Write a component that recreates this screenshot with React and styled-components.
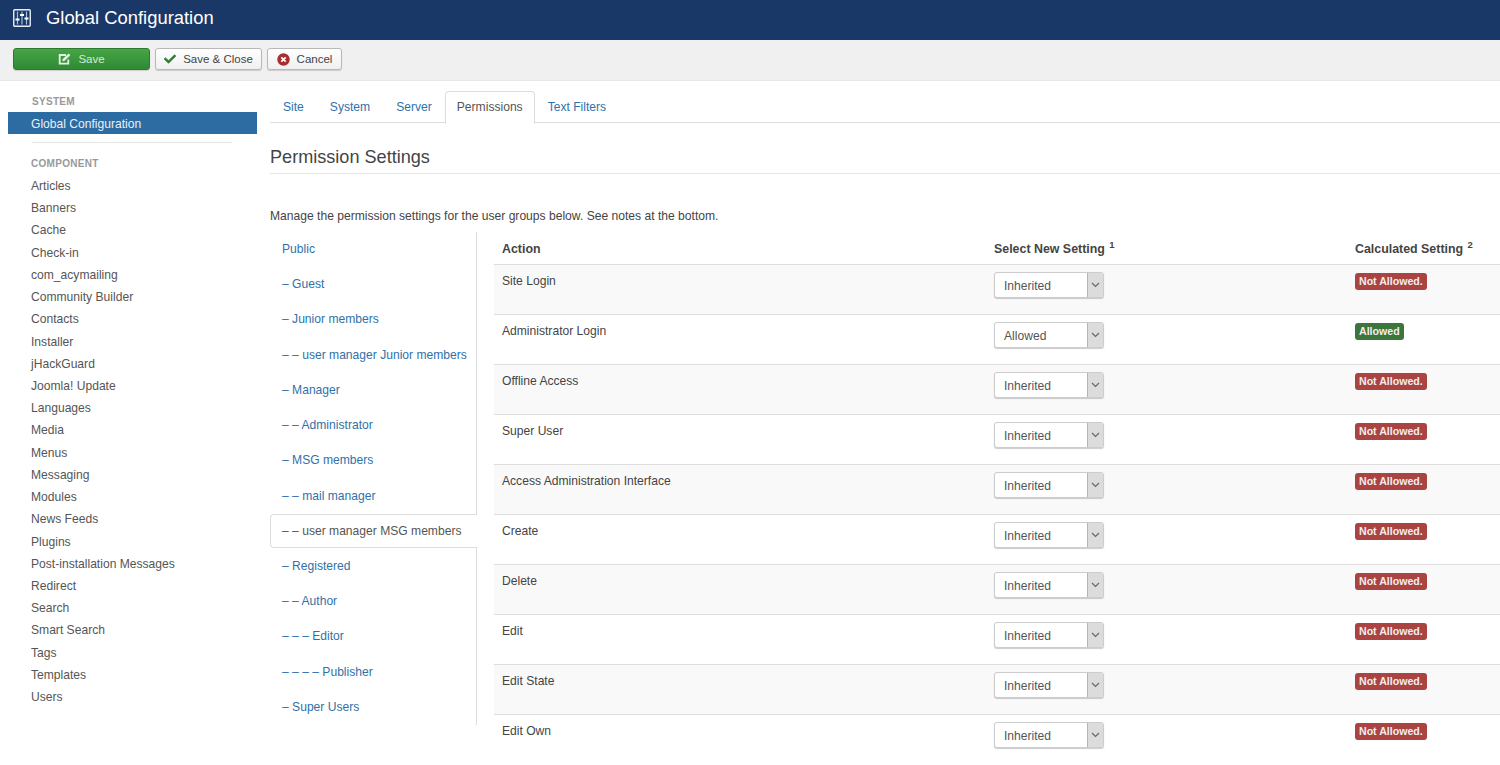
import React from 'react';
import styled, { createGlobalStyle } from 'styled-components';
import { FaCheck } from 'react-icons/fa';

const components = [
  'Articles', 'Banners', 'Cache', 'Check-in', 'com_acymailing', 'Community Builder', 'Contacts',
  'Installer', 'jHackGuard', 'Joomla! Update', 'Languages', 'Media', 'Menus', 'Messaging', 'Modules',
  'News Feeds', 'Plugins', 'Post-installation Messages', 'Redirect', 'Search', 'Smart Search', 'Tags',
  'Templates', 'Users',
];

const tabs = ['Site', 'System', 'Server', 'Permissions', 'Text Filters'];

const groups = [
  'Public', '– Guest', '– Junior members', '– – user manager Junior members', '– Manager',
  '– – Administrator', '– MSG members', '– – mail manager', '– – user manager MSG members',
  '– Registered', '– – Author', '– – – Editor', '– – – – Publisher', '– Super Users',
];

const actions = [
  ['Site Login', 'Inherited', false],
  ['Administrator Login', 'Allowed', true],
  ['Offline Access', 'Inherited', false],
  ['Super User', 'Inherited', false],
  ['Access Administration Interface', 'Inherited', false],
  ['Create', 'Inherited', false],
  ['Delete', 'Inherited', false],
  ['Edit', 'Inherited', false],
  ['Edit State', 'Inherited', false],
  ['Edit Own', 'Inherited', false],
];

const GlobalStyle = createGlobalStyle`
  html, body {
    margin: 0;
    padding: 0;
    background: #fff;
  }
  body {
    font-family: "Liberation Sans", Arial, sans-serif;
    font-size: 12.1px;
    line-height: 18px;
    color: #555;
  }
`;

const Page = styled.div`
  height: 765px;
  overflow: hidden;
`;

const Header = styled.header`
  height: 40px;
  background: #1a3867;
  display: flex;
  align-items: center;
  padding: 0 0 4px 13px;
  box-sizing: border-box;
  gap: 15px;
`;

const Title = styled.h1`
  margin: 0;
  font-size: 18.4px;
  font-weight: 400;
  color: #fff;
`;

const Toolbar = styled.div`
  height: 41px;
  box-sizing: border-box;
  background: #f0f0f0;
  border-bottom: 1px solid #e8e8e8;
  display: flex;
  align-items: center;
  gap: 5px;
  padding: 0 0 2px 13px;
`;

const Button = styled.button`
  height: 22px;
  width: ${(p) => p.$width}px;
  padding: 0;
  display: flex;
  align-items: center;
  justify-content: center;
  gap: 7px;
  font: inherit;
  font-size: 11.5px;
  border-radius: 3px;
  color: ${(p) => (p.$primary ? '#d8ecd2' : '#444')};
  background: ${(p) => (p.$primary ? 'linear-gradient(#46a546, #2f8a33)' : 'linear-gradient(#fff, #f0f0f0)')};
  border: 1px solid ${(p) => (p.$primary ? '#2b7a2f' : '#b8b8b8')};
  box-shadow: 0 1px 1px rgba(0, 0, 0, 0.15);
`;

const Main = styled.div`
  display: flex;
  align-items: flex-start;
`;

const Sidebar = styled.aside`
  width: 249px;
  margin-left: 8px;
  flex-shrink: 0;
  padding-top: 11px;
`;

const SideHeading = styled.div`
  font-size: 10px;
  font-weight: 700;
  line-height: 20px;
  color: #999;
  padding-left: ${(p) => p.$inset}px;
  letter-spacing: 0.3px;
`;

const SideActive = styled.div`
  height: 22px;
  line-height: 24px;
  padding-left: 23px;
  background: #2d6ca2;
  color: #e8f0f7;
`;

const SideDivider = styled.div`
  height: 1px;
  margin: 8px 25px 11px 24px;
  background: #e5e5e5;
`;

const SideList = styled.ul`
  list-style: none;
  margin: 1px 0 0;
  padding: 0;
`;

const SideItem = styled.li`
  height: 22.22px;
  line-height: 22px;
  padding-left: 23px;
  color: #555;
`;

const Content = styled.main`
  flex: 1;
  min-width: 0;
  margin-left: 13px;
  padding-top: 10px;
`;

const TabBar = styled.nav`
  height: 32px;
  box-sizing: border-box;
  display: flex;
  align-items: flex-start;
  padding-left: 1px;
  border-bottom: 1px solid #ddd;
`;

const Tab = styled.a`
  height: 32px;
  box-sizing: border-box;
  padding: 0 12px;
  margin-right: 2px;
  line-height: 33px;
  color: #3071a9;
  ${(p) => p.$active && `
    position: relative;
    background: #fff;
    color: #555;
    border: 1px solid #ddd;
    border-bottom-color: #fff;
    border-radius: 4px 4px 0 0;
    height: 33px;
    margin-left: -1px;
    margin-right: 1px;
    padding: 0 11px;
    line-height: 31px;
  `}
`;

const SectionTitle = styled.h2`
  margin: 0;
  height: 51px;
  box-sizing: border-box;
  padding-top: 22px;
  font-size: 18.1px;
  line-height: 24px;
  font-weight: 400;
  color: #444;
  border-bottom: 1px solid #e5e5e5;
`;

const Intro = styled.p`
  margin: 33px 0 7px;
  line-height: 18px;
  color: #444;
`;

const PermissionLayout = styled.div`
  display: flex;
  align-items: flex-start;
`;

const GroupNav = styled.ul`
  list-style: none;
  margin: 0;
  padding: 0;
  width: 206px;
  flex-shrink: 0;
  border-right: 1px solid #ddd;
`;

const GroupItem = styled.li`
  height: 35.23px;
  line-height: 35.6px;
  padding-left: 12px;
  box-sizing: border-box;
  white-space: nowrap;
  color: #3071a9;
  ${(p) => p.$active && `
    position: relative;
    height: 34px;
    margin-bottom: 1.23px;
    margin-right: -1px;
    background: #fff;
    color: #555;
    line-height: 33px;
    border: 1px solid #ddd;
    border-right: 0;
    border-radius: 4px 0 0 4px;
    padding-left: 11px;
  `}
`;

const Table = styled.table`
  margin-left: 17px;
  flex: 1;
  min-width: 0;
  border-collapse: collapse;
  table-layout: fixed;
  tbody tr:last-child td {
    border-bottom: 0;
  }
`;

const HeadCell = styled.th`
  height: 32px;
  box-sizing: border-box;
  padding: 2px 8px 0;
  text-align: left;
  font-size: 12.4px;
  font-weight: 700;
  color: #444;
  width: ${(p) => p.$width}px;
  border-bottom: 1px solid #ddd;
  vertical-align: middle;
  sup {
    font-size: 9.5px;
    line-height: 0;
    margin-left: 1px;
  }
`;

const Row = styled.tr`
  height: 50px;
  background: ${(p) => (p.$shaded ? '#f9f9f9' : '#fff')};
`;

const Cell = styled.td`
  padding: ${(p) => p.$top}px 8px 0;
  vertical-align: top;
  color: #444;
  border-bottom: 1px solid #ddd;
  box-sizing: border-box;
  height: 50px;
`;

const Select = styled.div`
  width: 110px;
  height: 26px;
  box-sizing: border-box;
  display: flex;
  background: #fff;
  border: 1px solid #ccc;
  border-radius: 3px;
  box-shadow: 0 1px 1px rgba(0, 0, 0, 0.2);
  color: #555;
  line-height: 26px;
`;

const SelectValue = styled.span`
  flex: 1;
  padding-left: 9px;
`;

const SelectArrow = styled.span`
  width: 15px;
  background: #dcdcdc;
  border-left: 1px solid #b5b5b5;
  border-radius: 0 2px 2px 0;
  display: flex;
  align-items: center;
  justify-content: center;
`;

const Badge = styled.span`
  display: inline-block;
  vertical-align: top;
  height: 17px;
  line-height: 17px;
  padding: 0 4px;
  font-size: 10.6px;
  font-weight: 700;
  color: #f4eeee;
  border-radius: 3px;
  background: ${(p) => (p.$ok ? '#3c763d' : '#a94442')};
`;

const SlidersIcon = () => (
  <svg width="18" height="18" viewBox="0 0 18 18" fill="none">
    <rect x="0.75" y="0.75" width="16.5" height="16.5" rx="1" stroke="#e8eef5" strokeWidth="1.4" />
    <path d="M4.5 2.5v13M9 2.5v13M13.5 2.5v13" stroke="#9fc0e0" strokeWidth="1.2" />
    <path d="M2.5 10.5h4M7 6h4M11.5 9.5h4" stroke="#fff" strokeWidth="2" />
  </svg>
);

const SaveIcon = () => (
  <svg width="13" height="12" viewBox="0 0 13 12" fill="none" stroke="#e8f3e4">
    <path d="M8 2H1.7v8.6h8.6V6.5" strokeWidth="1.8" />
    <path d="M4.6 8l.4-2L10.6.8l1.5 1.5L6.6 7.6z" fill="#e8f3e4" strokeWidth="0.5" />
  </svg>
);

const CancelIcon = () => (
  <svg width="13" height="13" viewBox="0 0 13 13">
    <circle cx="6.5" cy="6.5" r="6.2" fill="#a92f2f" />
    <path d="M4.3 4.3l4.4 4.4M8.7 4.3l-4.4 4.4" stroke="#fff" strokeWidth="1.7" />
  </svg>
);

const ChevronIcon = () => (
  <svg width="9" height="6" viewBox="0 0 9 6" fill="none" stroke="#666" strokeWidth="1.2">
    <path d="M1 1l3.5 3.5L8 1" />
  </svg>
);

export default function App() {
  return (
    <Page>
      <GlobalStyle />
      <Header>
        <SlidersIcon />
        <Title>Global Configuration</Title>
      </Header>
      <Toolbar>
        <Button $primary $width={137}>
          <SaveIcon />
          Save
        </Button>
        <Button $width={107}>
          <FaCheck size={12} color="#2f7d32" />
          Save &amp; Close
        </Button>
        <Button $width={75}>
          <CancelIcon />
          Cancel
        </Button>
      </Toolbar>
      <Main>
        <Sidebar>
          <SideHeading $inset={24}>SYSTEM</SideHeading>
          <SideActive>Global Configuration</SideActive>
          <SideDivider />
          <SideHeading $inset={23}>COMPONENT</SideHeading>
          <SideList>
            {components.map((name) => (
              <SideItem key={name}>{name}</SideItem>
            ))}
          </SideList>
        </Sidebar>
        <Content>
          <TabBar>
            {tabs.map((tab) => (
              <Tab key={tab} $active={tab === 'Permissions'}>{tab}</Tab>
            ))}
          </TabBar>
          <SectionTitle>Permission Settings</SectionTitle>
          <Intro>Manage the permission settings for the user groups below. See notes at the bottom.</Intro>
          <PermissionLayout>
            <GroupNav>
              {groups.map((group) => (
                <GroupItem key={group} $active={group === '– – user manager MSG members'}>{group}</GroupItem>
              ))}
            </GroupNav>
            <Table>
              <thead>
                <tr>
                  <HeadCell $width={492}>Action</HeadCell>
                  <HeadCell $width={361}>Select New Setting <sup>1</sup></HeadCell>
                  <HeadCell>Calculated Setting <sup>2</sup></HeadCell>
                </tr>
              </thead>
              <tbody>
                {actions.map(([name, value, allowed], i) => (
                  <Row key={name} $shaded={i % 2 === 0}>
                    <Cell $top={7}>{name}</Cell>
                    <Cell $top={7}>
                      <Select>
                        <SelectValue>{value}</SelectValue>
                        <SelectArrow><ChevronIcon /></SelectArrow>
                      </Select>
                    </Cell>
                    <Cell $top={8}>
                      <Badge $ok={allowed}>{allowed ? 'Allowed' : 'Not Allowed.'}</Badge>
                    </Cell>
                  </Row>
                ))}
              </tbody>
            </Table>
          </PermissionLayout>
        </Content>
      </Main>
    </Page>
  );
}
